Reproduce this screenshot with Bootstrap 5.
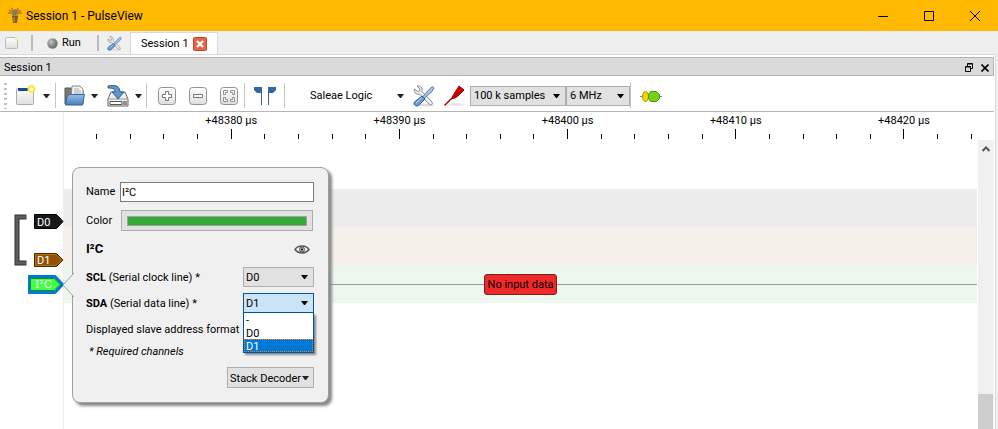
<!DOCTYPE html>
<html lang="en">
<head>
<meta charset="utf-8">
<meta name="viewport" content="width=device-width, initial-scale=1">
<title>Session 1 - PulseView</title>
<link href="https://cdn.jsdelivr.net/npm/bootstrap@5.3.0/dist/css/bootstrap.min.css" rel="stylesheet">
<style>
body{font:11px/14px Roboto,"Noto Sans",sans-serif;color:#000;background:#efefef;overflow:hidden}
button{border:0;padding:0;background:none;color:inherit;font:inherit;display:flex;align-items:center;flex:none}
svg{display:block;flex:none}
.titlebar{height:31px;background:#ffb900;font:12px/16px Roboto,"Noto Sans",sans-serif}
.winbtn{width:46px;height:31px;justify-content:center}
.sessions{height:23px;padding:1px 0 0 5px}
.vrule{width:1px;align-self:stretch;background:#c4c4c4;flex:none}
.sessions .vrule{width:2px;margin:3px 8px 3px 12px;background:#bcbcbc}
.run{padding:0 4px 0 6px}
.session-tab{width:88px;height:23px;background:#fff;border:1px solid #d9d9d9;border-bottom:0;padding-left:10px;gap:4px}
.dock{background:#fff;border:1px solid #d9d9d9;border-width:1px 1px 0 0;margin-right:2px}
.dock-inner{margin:2px 1px 0 0}
.dock-title{height:19px;background:#dadada;border:1px solid #b4b4b4;border-left:0;padding:2px 4px 0}
.tools{height:36px;border-bottom:1px solid #b4b4b4;padding:7px 0 3px 4px}
.grip{width:3px;height:26px;margin-right:5px;background:repeating-linear-gradient(#c0c0c0 0 2px,transparent 2px 5px)}
.drop{width:43px;gap:6px;padding-left:4px}
.tool{width:31px;justify-content:center}
.device{width:98px;justify-content:space-between;margin-left:25px}
.combo{appearance:none;border:1px solid #adadad;border-radius:0;color:#000;font:inherit;height:20px;padding:1px 16px 0 3px;background:#e1e1e1 url("data:image/svg+xml,%3Csvg xmlns='http://www.w3.org/2000/svg' width='7' height='4'%3E%3Cpath d='M0 0h7L4 4H3z'/%3E%3C/svg%3E") no-repeat right 5px center}
.combo.samples{width:96px}.combo.rate{width:64px}
.names{width:64px;border-right:1px solid #eee;padding-top:102px}
.group{margin-left:14px;gap:6px}
.ruler{height:28px;padding-top:2px;overflow:hidden}
.scale{margin:0 -10px 0 -85px;flex:1}
.scale>div{flex:1 1 0;text-align:center}
.scale span{height:14px;display:block}
.ticks{display:flex;align-items:flex-end;height:11px}
.ticks i{flex:1;display:flex;justify-content:center}
.ticks i::before{content:"";width:1px;height:5px;background:#000}
.ticks i:nth-child(3)::before{height:10px}
.lane{height:38px}
.lane-a{background:#ececec}.lane-b{background:#f5f0ea}.lane-c{background:#edf7ee}
.lanes{padding-top:49px;padding-right:1px}
.wire{height:1px;background:#999;flex:1}
.nodata{background:#ef2929;border:1px solid #772020;border-radius:3px;width:73px;height:21px;line-height:19px;text-align:center;white-space:nowrap}
.vscroll{width:16px;background:#f0f0f0;margin-top:28px}
.thumb{height:35px;width:15px;background:#cdcdcd}
.pop{position:absolute;left:72px;top:55px;width:257px;background:#f0f0f0;border:1px solid #a0a0a0;border-radius:8px;box-shadow:3px 3px 3px #888;padding:14px 14px 14px 13px;z-index:3}
.pointer{position:absolute;left:-11px;top:104px}
.pop input{height:20px;border:1px solid #7a7a7a;width:194px;padding:1px 1px 0;font:inherit;color:#000;border-radius:0}
.swatch{width:192px;height:21px;background:#e1e1e1;border:1px solid #adadad;padding:5px;margin-right:1px}
.swatch span{flex:1;height:10px;background:#33aa33;border:1px solid #a0a0a0}
.line{display:flex;align-items:center;justify-content:space-between;height:26px}
.line>label,.format,.pop .stack span{padding-top:2px}
.line.title-line{height:28px;margin:4px 0 1px}
.pick{width:71px;position:relative}
.pick .combo{width:100%;display:block;padding-left:2px}
.pick .combo.open{background-color:#cce4f7;border-color:#005499}
.choices{position:absolute;left:0;top:20px;width:100%;margin:0;padding:0;list-style:none;background:#fff;border:1px solid #005499;border-top:0;box-shadow:2px 2px 2px #888;z-index:4}
.choices li{height:13px;line-height:15px;padding-left:2px}
.choices .chosen{background:#0078d7;color:#fff;outline:1px dotted #f08020;outline-offset:-1px}
.required{padding:3px 0 0 3px}
.stack{height:21px;width:87px;background:#e1e1e1;border:1px solid #adadad;justify-content:space-between;padding:0 4px 0 2px;white-space:nowrap}
.heading{font-size:13px}
</style>
<script src="https://cdn.jsdelivr.net/npm/bootstrap@5.3.0/dist/js/bootstrap.bundle.min.js"></script>
</head>
<body class="d-flex flex-column vh-100">
<svg width="0" height="0" class="position-absolute" aria-hidden="true">
 <symbol id="wrench" viewBox="0 0 22 22">
  <ellipse cx="13" cy="20" rx="8" ry="1.500" fill="#ddd"/>
  <path d="M4 1l3 3-.5 2-2 .5-3-2.500C.5 7.500 3 10 6.500 9l10 10.500c1.500 1.300 4-.8 2.500-2.500L9 6.500C10 3 7.500.3 4 1z" fill="#eee" stroke="#8a8a8a"/>
  <path d="M19.500 1.500l1.500 1.500-2 3.500L11.500 13 10 11.500l6.500-7.500z" fill="#a9c4e4" stroke="#3465a4" stroke-width=".8"/>
  <path d="M9 11l3 3-6.500 6.500c-3 1.500-5.500-1-4-3.500z" fill="#6d9bd0" stroke="#28548c"/><path d="M3 18l6-5.500" stroke="#c0d7f0"/>
 </symbol>
 <symbol id="down" viewBox="0 0 7 4"><path d="M0 0h7L4 4H3z" fill="#222"/></symbol>
 <linearGradient id="plate" x2="0" y2="1"><stop stop-color="#fff"/><stop offset="1" stop-color="#dedede"/></linearGradient>
 <linearGradient id="blue" x2="0" y2="1"><stop stop-color="#9abde4"/><stop offset="1" stop-color="#477fbd"/></linearGradient>
 <radialGradient id="ball" cx=".35" cy=".35"><stop stop-color="#c4c6c2"/><stop offset="1" stop-color="#777a76"/></radialGradient>
</svg>

<header class="titlebar d-flex align-items-center">
 <svg width="14" height="16" class="ms-2 me-1" viewBox="0 0 14 16"><path d="M1 2l3 2M13 2l-3 2M0 5h4M14 5h-4M4 0l1 3M10 0L9 3" stroke="#cf6a12" stroke-width="1.500"/><path d="M3 2h8l-1 6H4z" fill="#b98a35"/><path d="M5 2l1 6M9 2L8 6M7 1v6" stroke="#6f7f5c" stroke-width="1.300"/><path d="M4 8h6l-1 7H5z" fill="#7c5a20"/><path d="M6 9v5" stroke="#c9a56a"/></svg>
 <span class="flex-grow-1">Session 1 - PulseView</span>
 <button class="winbtn" aria-label="Minimize"><svg width="10" height="10"><path d="M0 5.500h10" stroke="#000"/></svg></button>
 <button class="winbtn" aria-label="Maximize"><svg width="10" height="10"><path d="M.5.500h9v9h-9z" fill="none" stroke="#000"/></svg></button>
 <button class="winbtn" aria-label="Close"><svg width="10" height="10"><path d="M0 0l10 10M10 0L0 10" stroke="#000"/></svg></button>
</header>

<nav class="sessions d-flex align-items-center">
 <button aria-label="New session"><svg width="14" height="14"><rect x=".5" y="1.500" width="12" height="11" rx="1" fill="url(#plate)" stroke="#bbb"/><circle cx="11.500" cy="2.500" r="2" fill="#f3eda0"/></svg></button>
 <span class="vrule"></span>
 <button class="run gap-1"><svg width="11" height="11"><circle cx="5.500" cy="5.500" r="5.200" fill="url(#ball)"/></svg>Run</button>
 <span class="vrule"></span>
 <button class="me-2" aria-label="Settings"><svg width="15" height="15"><use href="#wrench"/></svg></button>
 <button class="session-tab">Session 1<svg width="14" height="14"><rect x=".5" y=".5" width="13" height="13" rx="1" fill="#e2654a" stroke="#c24830"/><path d="M4 4l6 6M10 4l-6 6" stroke="#fff" stroke-width="2.200"/></svg></button>
</nav>

<main class="dock flex-grow-1 d-flex flex-column">
 <div class="dock-inner flex-grow-1 d-flex flex-column">
 <div class="dock-title d-flex align-items-center">
  <span class="flex-grow-1">Session 1</span>
  <button class="me-2" aria-label="Float"><svg width="8" height="9"><path d="M2.500 3V.500h5v5H6M2 1h6" fill="none" stroke="#000"/><path d="M.5 3.500h5v5h-5zM0 4h6" fill="none" stroke="#000"/></svg></button>
  <button aria-label="Close dock"><svg width="8" height="8"><path d="M.5.500l7 7m0-7l-7 7" stroke="#000" stroke-width="1.600"/></svg></button>
 </div>

 <div class="tools d-flex align-items-center">
  <span class="grip"></span>
  <button class="drop" aria-label="New view"><svg width="21" height="21"><rect x=".5" y="3.500" width="17" height="16" rx="1" fill="url(#plate)" stroke="#aaa"/><path d="M2 4.500h13" stroke="#204a87" stroke-width="3"/><circle cx="15.500" cy="4" r="4" fill="#fce94f"/><circle cx="15.500" cy="4" r="1.600" fill="#fff"/></svg><svg width="7" height="4"><use href="#down"/></svg></button>
  <span class="vrule me-1"></span>
  <button class="drop" aria-label="Open"><svg width="21" height="21"><path d="M1 3h6l1 3h11v13H1z" fill="#777" stroke="#555"/><path d="M8 1h8l3 3v10H7z" fill="#f2f2f2" stroke="#888"/><path d="M10 4h5m-5 2h7m-7 2h7" stroke="#aaa"/><path d="M5 9.500h15.500L18.500 20H1.500L3 12z" fill="url(#blue)" stroke="#3465a4"/></svg><svg width="7" height="4"><use href="#down"/></svg></button>
  <button class="drop" aria-label="Save"><svg width="22" height="22"><path d="M4 7h14l3 7v7H1v-7z" fill="#eee" stroke="#666"/><path d="M1 14h20" stroke="#999"/><path d="M3 16.500h12v3H3z" fill="#fff" stroke="#555"/><path d="M17 16v4M19 16v4" stroke="#333"/><path d="M1 1c8-2 12 1 12 6h4l-6 7-6-7h3c0-3-2-4-7-4z" fill="#6395c8" stroke="#28618f"/></svg><svg width="7" height="4"><use href="#down"/></svg></button>
  <span class="vrule me-1"></span>
  <button class="tool" aria-label="Zoom in"><svg width="18" height="20"><rect x=".5" y="1.500" width="17" height="17" rx="3" fill="url(#plate)" stroke="#929292"/><path d="M7.500 5.500h3v3h3v3h-3v3h-3v-3h-3v-3h3z" fill="#fff" stroke="#777"/></svg></button>
  <button class="tool" aria-label="Zoom out"><svg width="18" height="20"><rect x=".5" y="1.500" width="17" height="17" rx="3" fill="url(#plate)" stroke="#929292"/><path d="M4.500 8.500h9v3h-9z" fill="#fff" stroke="#777"/></svg></button>
  <button class="tool" aria-label="Zoom to fit"><svg width="18" height="20"><rect x=".5" y="1.500" width="17" height="17" rx="3" fill="url(#plate)" stroke="#929292"/><path d="M3.500 8.500v-4h4v2h-2v2zM14.500 8.500v-4h-4v2h2v2zM3.500 11.500v4h4v-2h-2v-2zM14.500 11.500v4h-4v-2h2v-2z" fill="#fff" stroke="#777" stroke-width=".8"/></svg></button>
  <span class="vrule me-1"></span>
  <button class="tool" aria-label="Show cursors"><svg width="22" height="20"><path d="M0 1h8v18H7V7H3L0 4zM22 1h-8v18h1V7h4l3-3z" fill="#3465a4"/></svg></button>
  <span class="vrule ms-1"></span>
  <button class="device"><span>Saleae Logic</span><svg width="7" height="4" class="me-1"><use href="#down"/></svg></button>
  <button class="tool" aria-label="Configure device"><svg width="22" height="22"><use href="#wrench"/></svg></button>
  <button class="tool" aria-label="Configure channels"><svg width="21" height="22"><ellipse cx="12" cy="19.500" rx="8" ry="1.500" fill="#e5e5e5"/><path d="M.5 20.500L10 11" stroke="#a00" stroke-width="1.500"/><path d="M15 1l5 4-6 6-3 2-3 .5 1-3z" fill="#c00" stroke="#a40000"/></svg></button>
  <select class="combo samples" aria-label="Sample count"><option>100 k samples</option></select>
  <select class="combo rate" aria-label="Sample rate"><option>6 MHz</option></select>
  <span class="vrule me-1"></span>
  <button class="tool" aria-label="Add decoder"><svg width="22" height="14"><path d="M0 7.500h22" stroke="#888"/><ellipse cx="5.500" cy="7.500" rx="3" ry="5" fill="#edd400" stroke="#a89600"/><path d="M10.500 2.500h6l3 3v4l-3 3h-6l-2-3v-4z" fill="#73d216" stroke="#4e9a06"/></svg></button>
 </div>

 <div class="d-flex flex-grow-1 position-relative">
  <aside class="names d-flex flex-column">
   <div class="group d-flex align-items-start">
    <svg width="14" height="52"><path d="M12.500 3H3v46h9.500" fill="none" stroke="#2e3436" stroke-width="5"/><path d="M12 3H3v46h9" fill="none" stroke="#5a5d59" stroke-width="3"/></svg>
    <div>
     <button class="mb-4" aria-label="Channel D0"><svg width="30" height="15"><path d="M.5.500h22l6.500 7-6.500 7H.5z" fill="#16191a" stroke="#000"/><text x="3" y="12" fill="#fff" font-size="11">D0</text></svg></button>
     <button class="mt-3 mb-2" aria-label="Channel D1"><svg width="30" height="14"><path d="M.5.500h22l6.500 6.500-6.500 6.500H.5z" fill="#8f5202" stroke="#482901"/><path d="M1.500 1.500h20.500l5.500 5.500-5.500 5.500H1.500z" fill="none" stroke="#b8710e"/><text x="3" y="11" fill="#fff" font-size="11">D1</text></svg></button>
    </div>
   </div>
   <button class="ms-4 ps-1" aria-label="Decoder I²C"><svg width="36" height="20"><path d="M1 1.500h26l7.500 8-7.500 8H1z" fill="#4f4" stroke="#0078d7" stroke-width="3" stroke-linejoin="round"/><path d="M2.500 3.500h23.500l6 6-6 6H2.500z" fill="none" stroke="#228822"/><text x="7" y="13" fill="#fff" font-size="11" font-family="DejaVu Serif">I²C</text></svg></button>
  </aside>
  <section class="flex-grow-1 d-flex flex-column overflow-hidden">
   <div class="ruler d-flex">
    <div class="scale d-flex">
     <div><span></span><div class="ticks"><i></i><i></i><i></i><i></i><i></i></div></div>
     <div><span>+48380 µs</span><div class="ticks"><i></i><i></i><i></i><i></i><i></i></div></div>
     <div><span>+48390 µs</span><div class="ticks"><i></i><i></i><i></i><i></i><i></i></div></div>
     <div><span>+48400 µs</span><div class="ticks"><i></i><i></i><i></i><i></i><i></i></div></div>
     <div><span>+48410 µs</span><div class="ticks"><i></i><i></i><i></i><i></i><i></i></div></div>
     <div><span>+48420 µs</span><div class="ticks"><i></i><i></i><i></i><i></i><i></i></div></div>
    </div>
   </div>
   <div class="lanes">
    <div class="lane lane-a"></div>
    <div class="lane lane-b"></div>
    <div class="lane lane-c d-flex align-items-center"><span class="wire"></span><span class="nodata">No input data</span><span class="wire"></span></div>
   </div>
  </section>
  <div class="vscroll d-flex flex-column justify-content-between">
   <svg width="16" height="18"><path d="M4.500 11l3.500-3.500L11.500 11" fill="none" stroke="#555" stroke-width="2"/></svg>
   <div class="thumb"></div>
  </div>

  <form class="pop">
   <svg class="pointer" width="13" height="26"><path d="M13 0v26L1 13z" fill="#f0f0f0"/><path d="M12 1L1 13l11 12" fill="none" stroke="#a0a0a0"/></svg>
   <div class="d-flex align-items-center justify-content-between mb-2"><label for="name">Name</label><input id="name" value="I²C"></div>
   <div class="d-flex align-items-center justify-content-between mb-1"><span>Color</span><button type="button" class="swatch" aria-label="Color"><span></span></button></div>
   <div class="line title-line"><b class="heading">I²C</b><button type="button" class="me-1" aria-label="Show"><svg width="16" height="9"><path d="M1 4.500C4-.2 12-.2 15 4.500 12 9 4 9 1 4.500z" fill="#f8f8f8" stroke="#555" stroke-width="1.500"/><circle cx="8" cy="4.500" r="2.500" fill="#bbb" stroke="#555"/><circle cx="8" cy="4.500" r="1"/></svg></button></div>
   <div class="line"><label for="scl"><b>SCL</b> (Serial clock line) *</label><div class="pick"><select id="scl" class="combo"><option>D0</option><option>D1</option></select></div></div>
   <div class="line"><label for="sda"><b>SDA</b> (Serial data line) *</label><div class="pick"><select id="sda" class="combo open"><option>D1</option><option>D0</option></select>
    <ul class="choices"><li>-</li><li>D0</li><li class="chosen">D1</li></ul></div></div>
   <div class="line format">Displayed slave address format</div>
   <div class="required"><i>* Required channels</i></div>
   <div class="d-flex justify-content-end mt-1"><button type="button" class="stack mt-1"><span>Stack Decoder</span><svg width="7" height="4"><use href="#down"/></svg></button></div>
  </form>
 </div>
 </div>
</main>
</body>
</html>
